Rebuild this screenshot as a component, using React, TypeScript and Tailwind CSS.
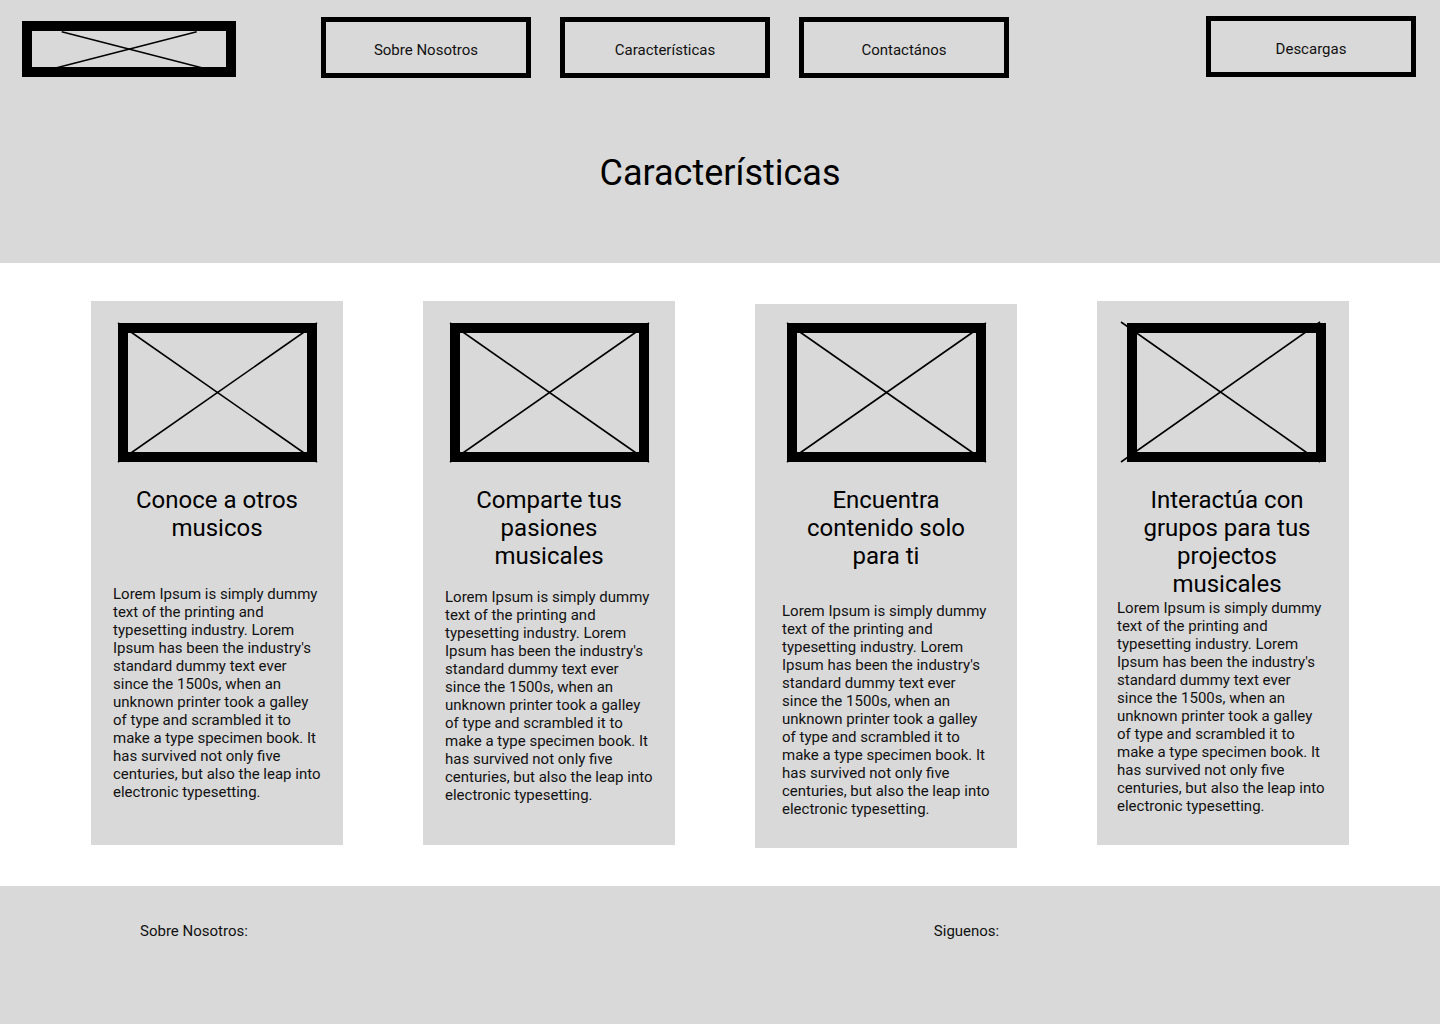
import React from "react";

const LOREM =
  "Lorem Ipsum is simply dummy text of the printing and typesetting industry. Lorem Ipsum has been the industry's standard dummy text ever since the 1500s, when an unknown printer took a galley of type and scrambled it to make a type specimen book. It has survived not only five centuries, but also the leap into electronic typesetting.";

function Placeholder({ shifted = false }: { shifted?: boolean }) {
  const w = 199;
  const h = 139;
  return (
    <svg width={w} height={h} viewBox={`0 0 ${w} ${h}`} className="block overflow-visible">
      {shifted ? (
        <>
          <line x1={-6} y1={-1} x2={193} y2={139} stroke="#000" strokeWidth={1.6} />
          <line x1={-6} y1={139} x2={193} y2={-1} stroke="#000" strokeWidth={1.6} />
        </>
      ) : (
        <>
          <line x1={0} y1={0} x2={w} y2={h} stroke="#000" strokeWidth={1.6} />
          <line x1={0} y1={h} x2={w} y2={0} stroke="#000" strokeWidth={1.6} />
        </>
      )}
      <rect x={5} y={5} width={w - 10} height={h - 10} fill="none" stroke="#000" strokeWidth={10} />
    </svg>
  );
}

function Logo() {
  return (
    <svg width={214} height={56} viewBox="0 0 214 56" className="block">
      <line x1={39.7} y1={10.7} x2={179.7} y2={46.7} stroke="#000" strokeWidth={1.4} />
      <line x1={174.7} y1={10.7} x2={34.7} y2={46.7} stroke="#000" strokeWidth={1.4} />
      <rect x={5} y={5} width={204} height={46} fill="none" stroke="#000" strokeWidth={10} />
    </svg>
  );
}

function NavButton({ label, className = "" }: { label: string; className?: string }) {
  return (
    <div
      className={`box-border flex h-[61px] w-[210px] items-center justify-center border-[5px] border-black pt-[6px] text-[15px] text-[#111] ${className}`}
    >
      {label}
    </div>
  );
}

type CardProps = {
  title: string;
  width: string;
  padTop: string;
  textMt: string;
  textPl: string;
  imgShift?: string;
  headShift?: string;
  shifted?: boolean;
  extraTop?: string;
};

function Card({
  title,
  width,
  padTop,
  textMt,
  textPl,
  imgShift = "",
  headShift = "mx-auto",
  shifted = false,
  extraTop = "",
}: CardProps) {
  return (
    <div className={`flex h-[544px] flex-col bg-[#d9d9d9] ${width} ${padTop} ${extraTop}`}>
      <div className={`flex justify-center ${imgShift}`}>
        <Placeholder shifted={shifted} />
      </div>
      <h2 className={`mt-[24px] w-[190px] text-center text-[24px] font-normal leading-[28px] text-black ${headShift}`}>
        {title}
      </h2>
      <p className={`w-[210px] text-[15px] leading-[18px] text-[#111] ${textMt} ${textPl}`}>{LOREM}</p>
    </div>
  );
}

export default function App() {
  return (
    <div className="min-h-[1024px] w-[1440px] bg-white" style={{ fontFamily: "Roboto, 'Liberation Sans', sans-serif" }}>
      <header className="h-[263px] bg-[#d9d9d9]">
        <div className="flex items-start pl-[22px]">
          <div className="mt-[21px]">
            <Logo />
          </div>
          <nav className="ml-[85px] mt-[17px] flex gap-[29px]">
            <NavButton label="Sobre Nosotros" />
            <NavButton label="Características" />
            <NavButton label="Contactános" />
          </nav>
          <div className="ml-auto mr-[24px] mt-[16px]">
            <NavButton label="Descargas" />
          </div>
        </div>
        <h1 className="mt-[74px] text-center text-[36px] font-normal leading-[42px] text-black">Características</h1>
      </header>

      <section className="flex h-[623px] items-start gap-[80px] pl-[91px] pt-[38px]">
        <Card title="Conoce a otros musicos" width="w-[252px]" padTop="pt-[22px]" textMt="mt-[43px]" textPl="ml-[22px]" />
        <Card title="Comparte tus pasiones musicales" width="w-[252px]" padTop="pt-[22px]" textMt="mt-[18px]" textPl="ml-[22px]" />
        <Card
          title="Encuentra contenido solo para ti"
          width="w-[262px]"
          padTop="pt-[19px]"
          extraTop="mt-[3px]"
          textMt="mt-[32px]"
          textPl="ml-[27px]"
        />
        <Card
          title="Interactúa con grupos para tus projectos musicales"
          width="w-[252px]"
          padTop="pt-[22px]"
          textMt="mt-[1px]"
          textPl="ml-[20px]"
          imgShift="pl-[7px]"
          headShift="ml-[35px]"
          shifted
        />
      </section>

      <footer className="flex h-[138px] bg-[#d9d9d9] pt-[36px] text-[15px] leading-[18px] text-[#111]">
        <div className="ml-[140px]">Sobre Nosotros:</div>
        <div className="ml-[686px]">Siguenos:</div>
      </footer>
    </div>
  );
}
